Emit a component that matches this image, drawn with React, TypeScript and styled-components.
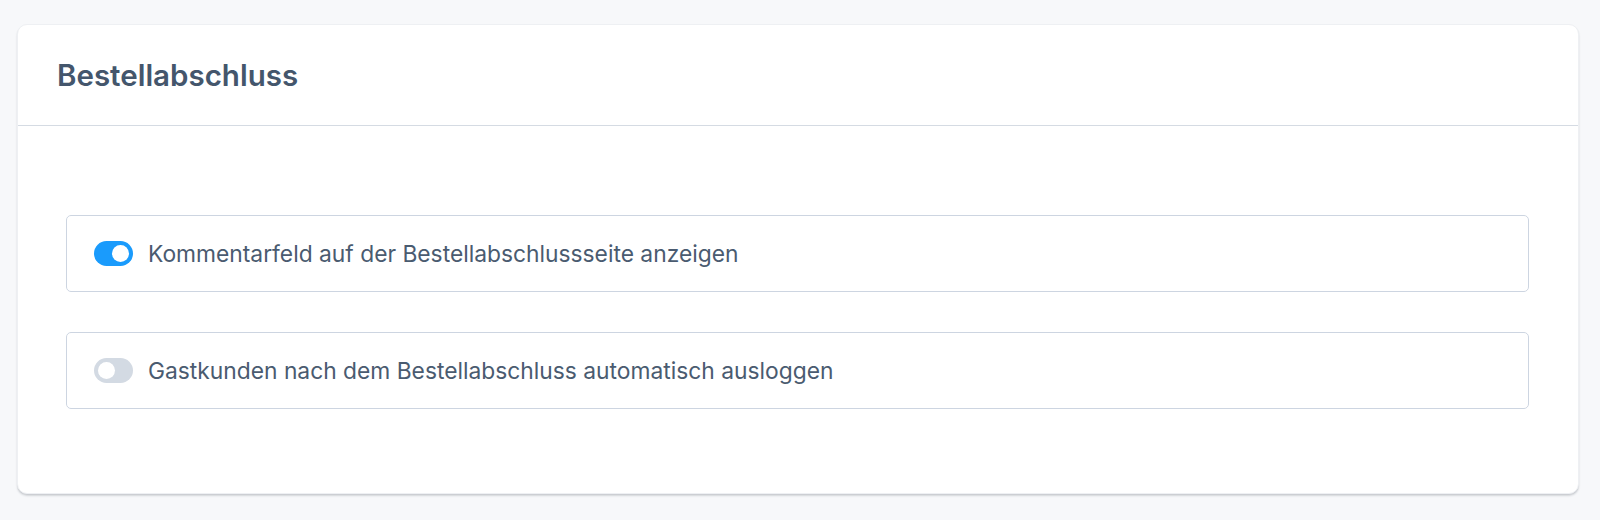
import React, { useState } from "react";
import styled, { createGlobalStyle } from "styled-components";

const GlobalStyle = createGlobalStyle`
  html, body {
    margin: 0;
    padding: 0;
    background: #f7f8fa;
    font-family: Inter, "Noto Sans", "Liberation Sans", sans-serif;
    -webkit-font-smoothing: antialiased;
  }
`;

const Page = styled.div`
  padding: 24px 21px 20px 17px;
`;

const Card = styled.section`
  background: #ffffff;
  border: 1px solid #eef0f3;
  border-radius: 10px;
  box-shadow: 0 2px 2px rgba(30, 41, 59, 0.16), 0 1px 1px rgba(30, 41, 59, 0.06);
  overflow: hidden;
`;

const Header = styled.header`
  padding: 32px 39px;
  border-bottom: 1px solid #d5dbe3;
`;

const Title = styled.h2`
  margin: 0;
  font-size: 29.5px;
  line-height: 36px;
  font-weight: 600;
  color: #44566c;
`;

const Body = styled.div`
  display: flex;
  flex-direction: column;
  gap: 40px;
  padding: 89px 49px 84px 48px;
`;

const Row = styled.label`
  display: flex;
  align-items: center;
  gap: 15px;
  height: 77px;
  box-sizing: border-box;
  padding: 0 27px;
  border: 1px solid #cdd5e1;
  border-radius: 5px;
  cursor: pointer;
`;

const Track = styled.span<{ $on: boolean }>`
  position: relative;
  flex: none;
  width: 39px;
  height: 25px;
  border-radius: 13px;
  background: ${(p) => (p.$on ? "#1a9bfc" : "#d3dae3")};
  transition: background 0.15s;
`;

const Knob = styled.span<{ $on: boolean }>`
  position: absolute;
  top: 4px;
  left: ${(p) => (p.$on ? "18px" : "4px")};
  width: 17px;
  height: 17px;
  border-radius: 50%;
  background: #ffffff;
  transition: left 0.15s;
`;

const Text = styled.span`
  font-size: 22.8px;
  line-height: 30px;
  color: #4a5b70;
`;

function Toggle({ on }: { on: boolean }) {
  return (
    <Track $on={on}>
      <Knob $on={on} />
    </Track>
  );
}

export default function App() {
  const [a, setA] = useState(true);
  const [b, setB] = useState(false);
  return (
    <>
      <GlobalStyle />
      <Page>
        <Card>
          <Header>
            <Title>Bestellabschluss</Title>
          </Header>
          <Body>
            <Row onClick={() => setA(!a)}>
              <Toggle on={a} />
              <Text>Kommentarfeld auf der Bestellabschlussseite anzeigen</Text>
            </Row>
            <Row onClick={() => setB(!b)}>
              <Toggle on={b} />
              <Text>Gastkunden nach dem Bestellabschluss automatisch ausloggen</Text>
            </Row>
          </Body>
        </Card>
      </Page>
    </>
  );
}
